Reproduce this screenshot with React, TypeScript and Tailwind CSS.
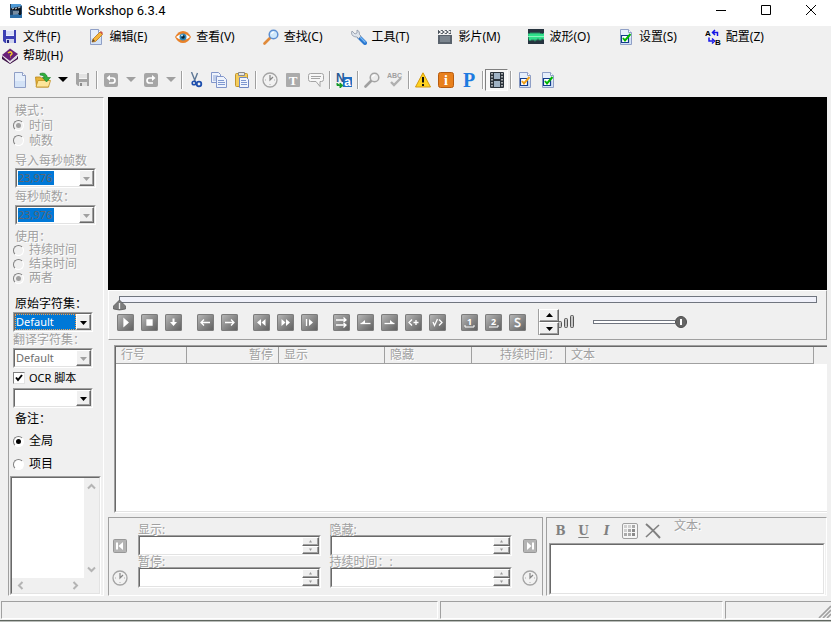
import { useState } from "react";
import type { ReactNode } from "react";
import clsx from "clsx";

const etched = "text-[#a0a0a0] [text-shadow:1px_1px_0_#fff]";
const sunken = "border border-t-[#a0a0a0] border-l-[#a0a0a0] border-r-white border-b-white";
const sunkenInner = "border border-t-[#696969] border-l-[#696969] border-r-[#e3e3e3] border-b-[#e3e3e3]";
const raised = "border border-t-white border-l-white border-r-[#696969] border-b-[#696969] shadow-[inset_-1px_-1px_0_#a0a0a0]";

function Icon({ children, size = 16 }: { children: ReactNode; size?: number }) {
  return (
    <svg width={size} height={size} viewBox={`0 0 ${size} ${size}`} className="shrink-0" aria-hidden="true">
      {children}
    </svg>
  );
}

/* ---------- icons ---------- */

const AppIcon = () => (
  <Icon>
    <path d="M2 1h10l2 2v12H2z" fill="#24405e" />
    <path d="M3 1h9l2 2-11 2z" fill="#4f9ad6" />
    <path d="M3 6l9-2v3H3z" fill="#111" />
    <path d="M4 6l2-1M7 6l2-1M10 5l2-1M5 9h6M5 11h5" stroke="#c9d8e4" />
    <path d="M2 12l12-1v4H2z" fill="#2c6ea8" />
    <path d="M11 5h2v7h-2z" fill="#0b1620" />
  </Icon>
);

const DiskIcon = ({ gray = false }: { gray?: boolean }) => (
  <Icon>
    <path d="M1 1h13v13H3l-2-2z" fill={gray ? "#a4a4a4" : "#3c3fb4"} />
    <path d="M4 1h8v6H4z" fill={gray ? "#f4f4f4" : "#eef1ff"} />
    <path d="M4 3h8M4 5h8" stroke={gray ? "#d0d0d0" : "#c4caf0"} />
    <path d="M4 10h8v4H4z" fill={gray ? "#e2e2e2" : "#cfd3ee"} />
    <path d="M5 11h2v3H5z" fill={gray ? "#8c8c8c" : "#23267c"} />
  </Icon>
);

const PageIcon = ({ children }: { children?: ReactNode }) => (
  <Icon>
    <path d="M2.500.5h8l3 3v12h-11z" fill="#e6effb" stroke="#8f9fc6" />
    <path d="M3 9h10v6H3z" fill="#d3e2f6" />
    <path d="M10.500.5v3h3" fill="#fff" stroke="#8f9fc6" />
    {children}
  </Icon>
);

const EditIcon = () => (
  <PageIcon>
    <path d="M4 13l1-3 7-7 2.500 2.500-7 7z" fill="#f5b73c" stroke="#b8741c" strokeWidth=".8" />
    <path d="M12 3l1-1 2 2-1 1.500z" fill="#cf5348" />
    <path d="M4 13l1-3 2 2z" fill="#5a4630" />
  </PageIcon>
);

const CheckPage = ({ color = "#00b400" }: { color?: string }) => (
  <PageIcon>
    <path d="M3.500 6.500h7v7h-7z" fill="#fff" stroke="#123c8c" strokeWidth="1.200" />
    <path d="M5 9l2 2.500L12.500 5" fill="none" stroke={color} strokeWidth="2" />
  </PageIcon>
);

const EyeIcon = () => (
  <Icon>
    <path d="M0 8Q3 2 8 2t8 6q-3 6-8 6T0 8z" fill="#e8822a" />
    <path d="M1 8q3-3 7-3t7 3q-3 3-7 3T1 8z" fill="#fff" />
    <circle cx="8" cy="8" r="3.500" fill="#2e86b8" />
    <circle cx="8" cy="8" r="1.800" fill="#0a2030" />
    <circle cx="7" cy="6.500" r="1" fill="#bfe6fa" />
  </Icon>
);

const SearchIcon = ({ gray = false }: { gray?: boolean }) => (
  <Icon>
    <path d="M1.500 14.500L7 9" stroke={gray ? "#a0a0a0" : "#e08a3a"} strokeWidth="2.600" strokeLinecap="round" />
    <circle cx="10.500" cy="5.500" r="4.300" fill={gray ? "#ededed" : "#cfe8fb"} stroke={gray ? "#a4a4a4" : "#5c8fd2"} strokeWidth="1.500" />
    <path d="M8.500 5q.5-2 2.500-2" fill="none" stroke="#fff" strokeWidth="1.200" />
  </Icon>
);

const WrenchIcon = () => (
  <Icon>
    <path d="M8 8l6 6" stroke="#2b78d0" strokeWidth="4" strokeLinecap="round" />
    <path d="M8 7l6 6" stroke="#7ab8f2" strokeWidth="1.300" strokeLinecap="round" />
    <path d="M1 2l3 3 2-1V1Q9 2 8.500 5.500L10 7 7.500 9.500 6 8Q1 8 .5 4z" fill="#dfe5ec" stroke="#8b96a6" strokeWidth=".8" />
  </Icon>
);

const ClapperIcon = () => (
  <Icon>
    <path d="M1 6h14v9H1z" fill="#59626c" />
    <path d="M3 8h10M3 10h10M3 12h10" stroke="#9ea7b0" />
    <path d="M1 1h13v4H1z" fill="#4a525b" />
    <path d="M2 1l3 2-3 2M6 1l3 2-3 2M10 1l3 2-3 2" fill="none" stroke="#fff" strokeWidth="1.300" />
  </Icon>
);

const WaveIcon = () => (
  <Icon>
    <path d="M0 0h16v15H0z" fill="#26333f" />
    <path d="M0 5l1-1 1 1 1-2 1 2 1-2 1 2 1-2 1 2 1-2 1 2 1-2 1 2 1-1 1 1 2-1v6l-1 1-1-2-1 3-1-2-1 2-1-3-1 3-1-2-1 3-1-3-1 2-1-2-1 2-1-1-1 1z" fill="#2fe08a" />
    <path d="M0 7.500h16" stroke="#8af5be" />
  </Icon>
);

const AbIcon = () => (
  <Icon>
    <g fontFamily="Liberation Sans, sans-serif" fontWeight="bold" fontSize="8">
      <text x="0" y="6.500">A</text>
      <text x="10" y="15.500">B</text>
    </g>
    <path d="M8 3.500h4.500V7M10 1L7.500 3.500 10 6M4 8.500v3.500h4M7 9.500L9.500 12 7 14.500" fill="none" stroke="#1616e6" strokeWidth="1.500" />
  </Icon>
);

const BookIcon = () => (
  <Icon>
    <path d="M0 8l8 7 8-7v3l-8 5-8-5z" fill="#3d1247" />
    <path d="M1 9l7 5 7-6v2l-7 5z" fill="#ddd5e2" />
    <path d="M0 7l8-6.500L16 6l-8 7z" fill="#682078" />
    <path d="M6 5q2-2 3.500-.5T8 7.500M8 9h.5" fill="none" stroke="#f5c92c" strokeWidth="1.500" />
  </Icon>
);

const OpenIcon = () => (
  <Icon>
    <path d="M.5 5h5l1 1h7v9h-12z" fill="#e8b33a" stroke="#b98518" strokeWidth=".8" />
    <path d="M3 8.500h12.500l-2 6.500H1z" fill="#fde59a" stroke="#c08f20" strokeWidth=".8" />
    <path d="M5 1.500q6-2 7.500 4h3L11.500 10 7.500 5.500h2Q8.500 3 5 3z" fill="#2fae3c" stroke="#1b7a28" strokeWidth=".6" />
  </Icon>
);

const UndoIcon = ({ flip = false }: { flip?: boolean }) => (
  <Icon>
    <rect x="1" y="1" width="14" height="14" rx="2" fill="#a6a6a6" />
    <g transform={flip ? "translate(16 0) scale(-1 1)" : undefined}>
      <path d="M6 6h3.500q2.500 0 2.500 2.500T9.500 11H6" fill="none" stroke="#fff" strokeWidth="1.700" />
      <path d="M3.500 6L7 3v6z" fill="#fff" />
    </g>
  </Icon>
);

const CutIcon = () => (
  <Icon>
    <path d="M3.500 0l4 10M9.500 1L6 10" stroke="#5f7896" strokeWidth="1.400" />
    <circle cx="6" cy="11" r="1.800" fill="none" stroke="#1e4fae" strokeWidth="1.600" />
    <circle cx="11" cy="12" r="2.300" fill="none" stroke="#1e4fae" strokeWidth="1.800" />
  </Icon>
);

const CopyIcon = () => (
  <Icon>
    <path d="M.5.5h7l2 2v8h-9z" fill="#eef3fc" stroke="#8296ca" />
    <path d="M2 4h5M2 6h5M2 8h4" stroke="#8fa6d6" />
    <path d="M5.500 4.500h7l3 3v8h-10z" fill="#eef3fc" stroke="#8296ca" />
    <path d="M7 8.500h6M7 10.500h7M7 12.500h7" stroke="#7f98d0" />
  </Icon>
);

const PasteIcon = () => (
  <Icon>
    <rect x="1.500" y="1.500" width="12" height="13" rx="1" fill="#f5cd5c" stroke="#c3962a" />
    <path d="M4.500.5h6v3h-6z" fill="#e4e4e4" stroke="#8a8a8a" />
    <path d="M5.500 5.500h7l2 2v8h-9z" fill="#f2f6fd" stroke="#7088c2" />
    <path d="M7 8.500h5M7 10.500h6M7 12.500h6" stroke="#7f98d0" />
  </Icon>
);

const ClockIcon = () => (
  <Icon>
    <circle cx="8" cy="8" r="7" fill="#f2f2f2" stroke="#a4a4a4" strokeWidth="1.300" />
    <path d="M8 3v5l3-3" fill="none" stroke="#858585" strokeWidth="1.200" />
    <path d="M3 8h1M12 8h1M8 12v1" stroke="#b0b0b0" />
  </Icon>
);

const TextIcon = () => (
  <Icon>
    <rect x="1" y="1" width="14" height="14" rx="1" fill="#ababab" />
    <text x="8" y="12.500" textAnchor="middle" fontFamily="Liberation Serif, serif" fontWeight="bold" fontSize="13" fill="#fff">T</text>
  </Icon>
);

const CommentIcon = () => (
  <Icon>
    <path d="M2.500 1.500h11q2 0 2 2v4q0 2-2 2H12v5l-4-5H2.500q-2 0-2-2v-4q0-2 2-2z" fill="#f7f7f7" stroke="#a4a4a4" />
    <path d="M3 4.500h10M3 6.500h9" stroke="#a4a4a4" />
  </Icon>
);

const TranslateIcon = () => (
  <Icon>
    <path d="M7 5h9v10H7z" fill="#1f6fc4" />
    <g fontWeight="bold">
      <text x="0" y="10" fontFamily="Liberation Sans, sans-serif" fontSize="12" fill="#2a5a94">N</text>
      <text x="11.500" y="14" textAnchor="middle" fontFamily="Liberation Sans, sans-serif" fontSize="12" fill="#fff">a</text>
    </g>
    <path d="M1 11v2.500h4M4 11l3 2.500L4 16z" fill="#169a2a" stroke="#169a2a" />
  </Icon>
);

const SpellIcon = () => (
  <Icon>
    <text x="0" y="6" fontFamily="Liberation Sans, sans-serif" fontWeight="bold" fontSize="7" fill="#a0a0a0">ABC</text>
    <path d="M4 10l3 3 7-7" fill="none" stroke="#b0b0b0" strokeWidth="2.400" />
  </Icon>
);

const WarnIcon = () => (
  <Icon>
    <path d="M8 .8L15.500 15H.5z" fill="#ffd21e" stroke="#d39a10" strokeLinejoin="round" />
    <path d="M8 5v5.500M8 12v2" stroke="#111" strokeWidth="2" />
  </Icon>
);

const InfoIcon = () => (
  <Icon>
    <rect x=".5" y=".5" width="15" height="15" rx="2" fill="#e8801c" stroke="#b75c10" />
    <text x="8" y="13" textAnchor="middle" fontFamily="Liberation Serif, serif" fontWeight="bold" fontSize="14" fill="#fff">i</text>
  </Icon>
);

const PascalIcon = () => (
  <Icon>
    <text x="8" y="14.500" textAnchor="middle" fontFamily="Liberation Serif, serif" fontWeight="bold" fontSize="20" fill="#1d7be0">P</text>
  </Icon>
);

const FilmIcon = () => (
  <Icon>
    <rect x="1" y="0" width="14" height="16" rx="1" fill="#2b333b" />
    <path d="M5 1h6v6H5zM5 9h6v6H5z" fill="#9fb2c4" />
    <path d="M3 1v14M13 1v14" stroke="#fff" strokeWidth="1.200" strokeDasharray="1.500 1.500" />
  </Icon>
);

/* ---------- title, menu, toolbar ---------- */

function TitleBar() {
  return (
    <header className="flex h-[26px] items-start justify-between bg-white">
      <div className="flex items-center gap-1 pl-2">
        <AppIcon />
        <h1 className="font-[Roboto,sans-serif] text-[13px] leading-[22px]">Subtitle Workshop 6.3.4</h1>
      </div>
      <div className="flex h-5 gap-[5px]">
        <button aria-label="Minimize" className="flex w-10 items-center justify-center">
          <Icon size={12}><path d="M1 6.500h10" stroke="#000" /></Icon>
        </button>
        <button aria-label="Maximize" className="flex w-10 items-center justify-center">
          <Icon size={12}><path d="M1.500 1.500h9v9h-9z" fill="none" stroke="#000" /></Icon>
        </button>
        <button aria-label="Close" className="flex w-10 items-center justify-center">
          <Icon size={12}><path d="M1 1l10 10M11 1L1 11" stroke="#000" /></Icon>
        </button>
      </div>
    </header>
  );
}

const menus: [string, ReactNode][] = [
  ["文件(F)", <DiskIcon />],
  ["编辑(E)", <EditIcon />],
  ["查看(V)", <EyeIcon />],
  ["查找(C)", <SearchIcon />],
  ["工具(T)", <WrenchIcon />],
  ["影片(M)", <ClapperIcon />],
  ["波形(O)", <WaveIcon />],
  ["设置(S)", <CheckPage />],
  ["配置(Z)", <AbIcon />],
  ["帮助(H)", <BookIcon />],
];

function MenuBar() {
  return (
    <nav className="flex flex-wrap gap-x-7 pl-0.5 pt-px">
      {menus.map(([label, icon]) => (
        <button key={label} className="flex h-[19px] items-center gap-[5px] whitespace-nowrap">
          {icon}
          {label}
        </button>
      ))}
    </nav>
  );
}

function ToolButton({ label, children }: { label: string; children: ReactNode }) {
  return (
    <button aria-label={label} className="flex h-[22px] w-[23px] items-center justify-center">
      {children}
    </button>
  );
}

function DropArrow({ gray = false }: { gray?: boolean }) {
  return (
    <button aria-label="More" className="flex h-[22px] w-[17px] items-center justify-center">
      <Icon size={10}><path d="M0 2h10L5 7z" fill={gray ? "#a0a0a0" : "#000"} /></Icon>
    </button>
  );
}

function Separator() {
  return (
    <span className="flex h-[18px] w-[5px] justify-center">
      <span className="w-0.5 border-l border-r border-l-[#a0a0a0] border-r-white" />
    </span>
  );
}

function Toolbar() {
  return (
    <div className="flex h-[30px] items-center pl-2">
      <ToolButton label="New"><PageIcon /></ToolButton>
      <ToolButton label="Open"><OpenIcon /></ToolButton>
      <DropArrow />
      <ToolButton label="Save"><DiskIcon gray /></ToolButton>
      <Separator />
      <ToolButton label="Undo"><UndoIcon /></ToolButton>
      <DropArrow gray />
      <ToolButton label="Redo"><UndoIcon flip /></ToolButton>
      <DropArrow gray />
      <Separator />
      <ToolButton label="Cut"><CutIcon /></ToolButton>
      <ToolButton label="Copy"><CopyIcon /></ToolButton>
      <ToolButton label="Paste"><PasteIcon /></ToolButton>
      <Separator />
      <ToolButton label="Timings"><ClockIcon /></ToolButton>
      <ToolButton label="Texts"><TextIcon /></ToolButton>
      <ToolButton label="Comment"><CommentIcon /></ToolButton>
      <Separator />
      <ToolButton label="Translator"><TranslateIcon /></ToolButton>
      <Separator />
      <ToolButton label="Search"><SearchIcon gray /></ToolButton>
      <ToolButton label="Spell check"><SpellIcon /></ToolButton>
      <Separator />
      <ToolButton label="Warnings"><WarnIcon /></ToolButton>
      <ToolButton label="Information"><InfoIcon /></ToolButton>
      <ToolButton label="Pascal scripts"><PascalIcon /></ToolButton>
      <Separator />
      <button aria-label="Video preview" className="flex h-[22px] w-[23px] items-center justify-center border border-t-[#808080] border-l-[#808080] border-r-white border-b-white bg-[#f7f7f7]">
        <FilmIcon />
      </button>
      <Separator />
      <ToolButton label="Settings"><CheckPage color="#f0a018" /></ToolButton>
      <ToolButton label="OCR settings"><CheckPage /></ToolButton>
    </div>
  );
}

/* ---------- left panel ---------- */

function Radio({ label, name, checked, onChange, disabled, className }: {
  label: string;
  name: string;
  checked: boolean;
  onChange?: () => void;
  disabled?: boolean;
  className?: string;
}) {
  return (
    <label className={clsx("flex items-center gap-[5px] leading-[14px]", disabled && etched, className)}>
      <span className="grid">
        <input
          type="radio"
          name={name}
          checked={checked}
          disabled={disabled}
          onChange={() => onChange?.()}
          className={clsx(
            "col-start-1 row-start-1 size-[11px] appearance-none rounded-full border border-t-[#808080] border-l-[#808080] border-r-white border-b-white",
            disabled ? "bg-[#f0f0f0]" : "bg-white"
          )}
        />
        {checked && (
          <span className={clsx("pointer-events-none col-start-1 row-start-1 size-[5px] place-self-center rounded-full", disabled ? "bg-[#a0a0a0]" : "bg-black")} />
        )}
      </span>
      {label}
    </label>
  );
}

function Combo({ id, label, value, look = "normal", className }: {
  id: string;
  label?: string;
  value: string;
  look?: "normal" | "disabled" | "selected" | "edit";
  className?: string;
}) {
  const off = look === "disabled" || look === "edit";
  return (
    <div className={clsx("h-5 w-20", sunken, className)}>
      <div className={clsx("flex h-[18px] items-stretch justify-between bg-white", sunkenInner)}>
        <select
          id={id}
          aria-label={label}
          disabled={off}
          className={clsx(
            "appearance-none text-[11px] opacity-100",
            look === "edit" && "m-px w-9 bg-[#0078d7] leading-[14px] text-[#5c6670]",
            look === "selected" && "w-[61px] border border-dotted border-[#f0a050] bg-[#0078d7] leading-[14px] text-white",
            look === "disabled" && "w-[61px] pl-px leading-4 text-[#6d6d6d]",
            look === "normal" && "w-[61px]"
          )}
        >
          <option>{value}</option>
        </select>
        <span className={clsx("pointer-events-none flex w-[15px] items-center justify-center bg-[#f0f0f0]", raised)}>
          <Icon size={7}><path d="M0 2h7L3.500 6z" fill={off ? "#a0a0a0" : "#000"} /></Icon>
        </span>
      </div>
    </div>
  );
}

const Chevron = ({ d }: { d: string }) => (
  <Icon size={9}><path d={d} fill="none" stroke="#b4b4b4" strokeWidth="2" /></Icon>
);

function SidePanel() {
  const [ocr, setOcr] = useState(true);
  const [scope, setScope] = useState("all");

  return (
    <aside className="flex w-24 shrink-0 flex-col border border-t-[#a0a0a0] border-l-[#a0a0a0] border-r-white border-b-white pl-1 pt-1.5">
      <span className={clsx("pl-0.5 leading-[14px]", etched)}>模式：</span>
      <Radio className="h-[15px]" name="mode" label="时间" checked disabled />
      <Radio className="h-[15px]" name="mode" label="帧数" checked={false} disabled />
      <label htmlFor="input-fps" className={clsx("mt-1.5 whitespace-nowrap pl-0.5 leading-[14px]", etched)}>导入每秒帧数</label>
      <Combo id="input-fps" value="23,976" look="edit" className="ml-0.5 w-[81px]" />
      <label htmlFor="fps" className={clsx("pl-0.5 leading-[17px]", etched)}>每秒帧数：</label>
      <Combo id="fps" value="23,976" look="edit" className="ml-0.5 w-[81px]" />
      <span className={clsx("mt-1.5 pl-0.5 leading-3", etched)}>使用：</span>
      <Radio className="h-3.5" name="use" label="持续时间" checked={false} disabled />
      <Radio className="h-3.5" name="use" label="结束时间" checked={false} disabled />
      <Radio className="h-3.5" name="use" label="两者" checked disabled />
      <label htmlFor="org-charset" className="mt-2.5 whitespace-nowrap pl-0.5 leading-[17px]">原始字符集：</label>
      <Combo id="org-charset" value="Default" look="selected" />
      <label htmlFor="trans-charset" className={clsx("whitespace-nowrap leading-4", etched)}>翻译字符集：</label>
      <Combo id="trans-charset" value="Default" look="disabled" />
      <label className="flex h-5 items-center gap-1 text-[11px]">
        <span className="grid">
          <input
            type="checkbox"
            checked={ocr}
            onChange={(e) => setOcr(e.target.checked)}
            className="col-start-1 row-start-1 size-3 appearance-none border border-t-[#808080] border-l-[#808080] border-r-[#e3e3e3] border-b-[#e3e3e3] bg-white"
          />
          {ocr && (
            <span className="pointer-events-none col-start-1 row-start-1 place-self-center">
              <Icon size={8}><path d="M1 3.500l2 2.500 4-5" fill="none" stroke="#000" strokeWidth="2" /></Icon>
            </span>
          )}
        </span>
        OCR 脚本
      </label>
      <Combo id="ocr-script" label="OCR 脚本" value="" />
      <span className="pl-0.5 leading-[22px]">备注：</span>
      <Radio className="h-[22px]" name="scope" label="全局" checked={scope === "all"} onChange={() => setScope("all")} />
      <Radio className="h-6" name="scope" label="项目" checked={scope === "item"} onChange={() => setScope("item")} />
      <div className={clsx("-ml-[3px] mr-0.5 flex flex-1", sunken)}>
        <div className={clsx("grid flex-1 grid-cols-[1fr_15px] grid-rows-[1fr_15px]", sunkenInner)}>
          <textarea aria-label="备注" className="w-full resize-none bg-white" />
          <div className="flex flex-col items-center justify-between py-1">
            <Chevron d="M1 6.500L4.500 3 8 6.500" />
            <Chevron d="M1 2.500L4.500 6 8 2.500" />
          </div>
          <div className="flex items-center justify-between px-1">
            <Chevron d="M6.500 1L3 4.500 6.500 8" />
            <Chevron d="M2.500 1L6 4.500 2.500 8" />
          </div>
        </div>
      </div>
    </aside>
  );
}

/* ---------- player ---------- */

function Glyph({ children }: { children: string }) {
  return (
    <text x="8.500" y="11" textAnchor="middle" fontFamily="Noto Sans, sans-serif" fontWeight="bold" fontSize="9" fill="#fff" stroke="none">
      {children}
    </text>
  );
}

const playerGroups: { label: string; art: ReactNode }[][] = [
  [
    { label: "Play", art: <path d="M7 5l4 3.500L7 12z" fill="#fff" /> },
    { label: "Stop", art: <path d="M6 6h5v5H6z" fill="#fff" /> },
    { label: "Scroll list", art: <path d="M7.500 4.500h2V8H12l-3.500 4L5 8h2.500z" fill="#fff" stroke="none" /> },
  ],
  [
    { label: "Previous subtitle", art: <path d="M4 8.500h9M7 5.500l-3 3 3 3" /> },
    { label: "Next subtitle", art: <path d="M4 8.500h9M10 5.500l3 3-3 3" /> },
  ],
  [
    { label: "Rewind", art: <path d="M8 5v7L4 8.500zM12.500 5v7l-4-3.500z" fill="#fff" stroke="none" /> },
    { label: "Forward", art: <path d="M4.500 5v7l4-3.500zM9 5v7l4-3.500z" fill="#fff" stroke="none" /> },
    { label: "Playback rate", art: <><path d="M5.500 5v7" /><path d="M8 5v7l4-3.500z" fill="#fff" stroke="none" /></> },
  ],
  [
    { label: "Move subtitle", art: <path d="M3 6h9M3 11h9M10.500 3.500L13 6l-2.500 2M10.500 9l2.500 2-2.500 2.500" /> },
    { label: "Set start time", art: <><path d="M3.500 9.500h10" /><path d="M8 6v3H4.500z" fill="#fff" stroke="none" /></> },
    { label: "Set final time", art: <><path d="M3.500 9.500h10" /><path d="M9 6v3h3.500z" fill="#fff" stroke="none" /></> },
    { label: "Start subtitle", art: <path d="M7 5.500l-3 3 3 3M8.500 8.500h5M11 6v5" /> },
    { label: "End subtitle", art: <path d="M4 8l1.500 3.500L8.500 5M10 5.500l3 3-3 3" /> },
  ],
  [
    { label: "First sync point", art: <><Glyph>1</Glyph><path d="M4 11v2h9v-2" strokeWidth="1" /></> },
    { label: "Last sync point", art: <><Glyph>2</Glyph><path d="M4 13h9v-2" strokeWidth="1" /></> },
    { label: "Sync", art: <text x="8.500" y="13" textAnchor="middle" fontFamily="Noto Sans, sans-serif" fontSize="12" fill="#fff" strokeWidth=".4">S</text> },
  ],
];

function Player() {
  return (
    <div className="h-[50px] border border-t-white border-l-white border-r-[#a0a0a0] border-b-[#a0a0a0] pt-[5px]">
      <div className="flex h-[17px] items-start pl-2.5 pr-[9px]">
        <div role="slider" aria-label="Seek" aria-valuenow={0} tabIndex={0} className="relative h-[7px] flex-1 border border-[#70757f] bg-[#f0f1fa]">
          <span className="absolute -left-[7px] top-[3px]">
            <Icon size={13}>
              <path d="M6.500 0L12.500 6v3q-6 2-12 0V6z" fill="#7c7c7c" stroke="#555" strokeWidth=".7" />
              <path d="M6.500 3v6" stroke="#eee" strokeWidth="1.300" />
            </Icon>
          </span>
        </div>
      </div>
      <div className="-mt-0.5 flex h-[22px] items-center pl-2">
        <div className="flex gap-[15px]">
          {playerGroups.map((group, i) => (
            <div key={i} className="flex gap-[7px]">
              {group.map((b) => (
                <button
                  key={b.label}
                  aria-label={b.label}
                  className="size-[17px] rounded-[2px] bg-linear-to-br from-[#bcbcbc] to-[#5c5c5c] shadow-[inset_0_0_0_1px_#7c7c7c]"
                >
                  <svg width="17" height="17" viewBox="0 0 17 17" fill="none" stroke="#fff" strokeWidth="1.300">{b.art}</svg>
                </button>
              ))}
            </div>
          ))}
        </div>
        <div className="ml-3 flex h-[26px] w-[21px] shrink-0 flex-col border-l border-[#a0a0a0]">
          <button aria-label="Up" className={clsx("flex flex-1 items-center justify-center", raised)}>
            <Icon size={7}><path d="M0 5h7L3.500 1z" /></Icon>
          </button>
          <button aria-label="Down" className={clsx("flex flex-1 items-center justify-center", raised)}>
            <Icon size={7}><path d="M0 2h7L3.500 6z" /></Icon>
          </button>
        </div>
        <Icon size={16}>
          <g fill="#c6c6c6" stroke="#555">
            <rect x="-.5" y="7.500" width="3" height="6" rx="1" />
            <rect x="5.500" y="4.500" width="3" height="9" rx="1" />
            <rect x="11.500" y="1.500" width="3" height="12" rx="1" />
          </g>
        </Icon>
        <div role="slider" aria-label="Volume" aria-valuenow={100} tabIndex={0} className="ml-[18px] flex w-[94px] items-center">
          <span className="h-1 flex-1 border border-r-0 border-[#70757f] bg-white" />
          <Icon size={12}>
            <circle cx="6" cy="6" r="5.500" fill="#666" stroke="#4c4c4c" />
            <path d="M6 3v6" stroke="#fff" strokeWidth="2" />
          </Icon>
        </div>
      </div>
    </div>
  );
}

/* ---------- subtitle list ---------- */

function SubtitleList() {
  const th = "border-b border-r border-[#a0a0a0] px-[5px] font-normal leading-4";
  return (
    <div className={clsx("ml-1.5 mt-[5px] flex h-[168px]", sunken, "border-r-0")}>
      <div className="flex-1 border border-r-0 border-t-[#696969] border-l-[#696969] border-b-[#e3e3e3] bg-white">
        <table className="w-full table-fixed border-separate border-spacing-0 text-left">
          <colgroup>
            <col className="w-[71px]" />
            <col className="w-[92px]" />
            <col className="w-[106px]" />
            <col className="w-[87px]" />
            <col className="w-[94px]" />
            <col />
            <col className="w-[13px]" />
          </colgroup>
          <thead className={clsx("bg-[#f0f0f0]", etched)}>
            <tr>
              <th className={th}>行号</th>
              <th className={clsx(th, "text-right")}>暂停</th>
              <th className={th}>显示</th>
              <th className={th}>隐藏</th>
              <th className={clsx(th, "whitespace-nowrap text-right")}>持续时间：</th>
              <th className={th}>文本</th>
              <td />
            </tr>
          </thead>
          <tbody />
        </table>
      </div>
    </div>
  );
}

/* ---------- editor ---------- */

function TimeBox({ id, label }: { id: string; label: string }) {
  return (
    <div className="min-w-0 flex-1">
      <label htmlFor={id} className={clsx("block whitespace-nowrap leading-[11px]", etched)}>{label}</label>
      <div className={clsx("flex h-[21px]", sunken)}>
        <div className={clsx("flex min-w-0 flex-1 bg-white", sunkenInner)}>
          <input id={id} disabled className="min-w-0 flex-1 bg-white px-1" />
          <div className="flex w-[17px] flex-col bg-[#f0f0f0]">
            <button disabled aria-label="Increase" className={clsx("flex flex-1 items-center justify-center", raised)}>
              <Icon size={5}><path d="M1 3.500h3L2.500 1z" fill="#999" /></Icon>
            </button>
            <button disabled aria-label="Decrease" className={clsx("flex flex-1 items-center justify-center", raised)}>
              <Icon size={5}><path d="M1 1.500h3L2.500 4z" fill="#999" /></Icon>
            </button>
          </div>
        </div>
      </div>
    </div>
  );
}

function SkipButton({ label, flip = false }: { label: string; flip?: boolean }) {
  return (
    <button disabled aria-label={label}>
      <Icon>
        <rect x="1.500" y="1.500" width="13" height="13" rx="1" fill="#b4b4b4" stroke="#979797" />
        <g transform={flip ? "translate(16 0) scale(-1 1)" : undefined}>
          <path d="M5 4.500v7" stroke="#fff" strokeWidth="2" />
          <path d="M11 4v8L6.500 8z" fill="#fff" />
        </g>
      </Icon>
    </button>
  );
}

function TimingPanel() {
  return (
    <section className="flex w-[435px] shrink-0 border border-t-[#a0a0a0] border-l-[#a0a0a0] border-r-[#a0a0a0] border-b-white pl-[3px] pr-1 pt-1.5">
      <div className="flex w-[26px] shrink-0 flex-col items-start gap-4 pt-3.5">
        <SkipButton label="Previous" />
        <button disabled aria-label="Set pause"><ClockIcon /></button>
      </div>
      <div className="flex min-w-0 flex-1 flex-col">
        <div className="flex gap-[9px]">
          <TimeBox id="show" label="显示:" />
          <TimeBox id="hide" label="隐藏:" />
        </div>
        <div className="flex gap-[9px]">
          <TimeBox id="pause" label="暂停:" />
          <TimeBox id="duration" label="持续时间：:" />
        </div>
      </div>
      <div className="flex w-[26px] shrink-0 flex-col items-end gap-4 pt-3.5">
        <SkipButton label="Next" flip />
        <button disabled aria-label="Set duration"><ClockIcon /></button>
      </div>
    </section>
  );
}

function TextPanel() {
  return (
    <section className="flex min-w-0 flex-1 flex-col border border-t-[#a0a0a0] border-l-[#a0a0a0] border-r-white border-b-white pl-0.5">
      <div className="flex h-[25px] items-start">
        <div className="flex h-[25px] items-center font-['DejaVu_Serif',serif] text-xs font-bold text-[#808080]">
          <button aria-label="Bold" className="w-[23px]">B</button>
          <button aria-label="Underline" className="w-[23px] underline underline-offset-2">U</button>
          <button aria-label="Italic" className="w-[23px] italic">I</button>
          <button aria-label="Color" className="flex w-[23px] justify-center">
            <Icon>
              <rect x=".5" y=".5" width="15" height="15" rx="1.500" fill="#f6f6f6" stroke="#a0a0a0" />
              <path d="M2 2h3v3H2zM2 6h3v3H2zM6 2h3v3H6z" fill="#cfcfcf" />
              <path d="M10 2h3v3h-3zM6 6h3v3H6zM2 10h3v3H2zM6 10h3v3H6z" fill="#aaa" />
              <path d="M10 6h3v3h-3zM10 10h3v3h-3z" fill="#8a8a8a" />
            </Icon>
          </button>
          <button aria-label="Clear" className="flex w-[23px] justify-center">
            <Icon>
              <path d="M1 1q6 5 14 14" fill="none" stroke="#808080" strokeWidth="2" />
              <path d="M14 2L1 14" stroke="#808080" strokeWidth="1.600" />
            </Icon>
          </button>
        </div>
        <label htmlFor="sub-text" className={clsx("pl-2.5 leading-4", etched)}>文本:</label>
      </div>
      <div className={clsx("mr-px flex flex-1", sunken)}>
        <textarea id="sub-text" disabled className={clsx("flex-1 resize-none bg-white", sunkenInner)} />
      </div>
    </section>
  );
}

function StatusBar() {
  const cell = "h-[18px] border border-t-[#a0a0a0] border-l-[#a0a0a0] border-r-white border-b-white";
  return (
    <footer className="mt-[5px] flex gap-0.5 pl-px">
      <div className={clsx(cell, "w-[437px]")} />
      <div className={clsx(cell, "w-[283px]")} />
      <div className={clsx(cell, "flex flex-1 items-end justify-end border-r-0")}>
        <Icon size={13}>
          <path d="M1 13L13 1M5 13l8-8M9 13l4-4" stroke="#a0a0a0" strokeWidth="1.600" />
        </Icon>
      </div>
    </footer>
  );
}

export default function App() {
  return (
    <div className="flex min-h-screen flex-col bg-[#f0f0f0] font-['Noto_Sans','Noto_Sans_CJK_SC',sans-serif] text-xs text-black">
      <TitleBar />
      <MenuBar />
      <Toolbar />
      <main className="mt-0.5 flex flex-1 gap-1 pl-2 pr-1">
        <SidePanel />
        <div className="flex min-w-0 flex-1 flex-col">
          <div className="h-[193px] bg-black" />
          <Player />
          <SubtitleList />
          <div className="mt-1 flex flex-1 gap-[3px]">
            <TimingPanel />
            <TextPanel />
          </div>
        </div>
      </main>
      <StatusBar />
      <div className="mt-px h-0.5 border-t border-[#5f665f] bg-[#b9bcb9]" />
    </div>
  );
}
